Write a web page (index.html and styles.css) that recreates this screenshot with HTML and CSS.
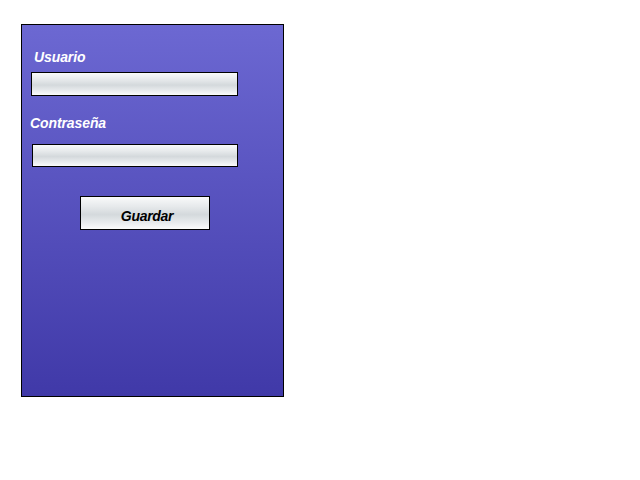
FILE: index.html
```html
<!DOCTYPE html>
<html>
<head>
<meta charset="utf-8">
<link rel="stylesheet" href="styles.css">
</head>
<body>
<form class="panel">
  <label class="label label-user">Usuario</label>
  <div class="field field-user"></div>
  <label class="label label-pass">Contraseña</label>
  <div class="field field-pass"></div>
  <div class="button">Guardar</div>
</form>
</body>
</html>
```

FILE: styles.css
```css
html, body {
  margin: 0;
  padding: 0;
  background: #ffffff;
}
body {
  padding: 24px 0 0 21px;
  font-family: "Liberation Sans", Arial, sans-serif;
}
.panel {
  box-sizing: border-box;
  width: 263px;
  height: 373px;
  border: 1px solid #000;
  background: linear-gradient(to bottom, #6c68d2 0%, #4039a8 100%);
  display: flex;
  flex-direction: column;
  align-items: flex-start;
  margin: 0;
}
.label {
  color: #ffffff;
  font-weight: bold;
  font-style: italic;
  font-size: 14px;
  line-height: 16px;
  letter-spacing: -0.1px;
}
.label-user {
  margin: 24px 0 0 12px;
}
.label-pass {
  margin: 19px 0 0 8px;
}
.field {
  box-sizing: border-box;
  border: 1px solid #000;
  background: linear-gradient(to bottom, #f9fafa 0%, #e6e9eb 30%, #d4d9dc 55%, #e8ebed 80%, #fafbfb 100%);
}
.field-user {
  width: 207px;
  height: 24px;
  margin: 7px 0 0 9px;
}
.field-pass {
  width: 206px;
  height: 23px;
  margin: 13px 0 0 10px;
}
.button {
  box-sizing: border-box;
  width: 130px;
  height: 34px;
  margin: 29px 0 0 58px;
  border: 1px solid #000;
  background: linear-gradient(to bottom, #f9fafa 0%, #e6e9eb 30%, #d4d9dc 55%, #e8ebed 80%, #fafbfb 100%);
  color: #000;
  font-weight: bold;
  font-style: italic;
  font-size: 14px;
  line-height: 16px;
  letter-spacing: -0.3px;
  display: flex;
  align-items: center;
  justify-content: center;
  padding-top: 5px;
  padding-left: 4px;
}
```
